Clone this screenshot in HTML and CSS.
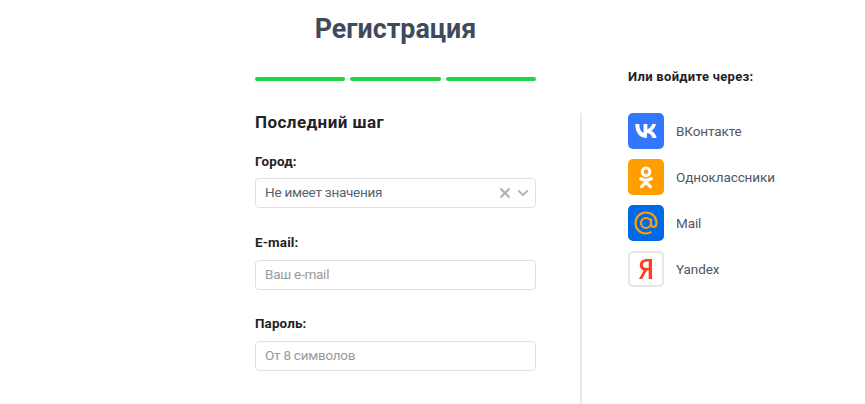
FILE: index.html
```html
<!DOCTYPE html>
<html lang="ru">

<head>
    <meta charset="UTF-8">
    <meta name="viewport" content="width=device-width, initial-scale=1.0">
    <title>Регистрация</title>
    <link rel="stylesheet" href="styles.css">
</head>

<body>
    <div class="page">
        <div class="head">
            <h1>Регистрация</h1>
            <div class="steps">
                <span class="step"></span>
                <span class="step"></span>
                <span class="step"></span>
            </div>
        </div>
        <div class="alt-title">Или войдите через:</div>

        <form class="form">
            <h2>Последний шаг</h2>

            <label class="field-label">Город:</label>
            <div class="select">
                <span class="select-value">Не имеет значения</span>
                <svg class="select-clear" width="12" height="12" viewBox="0 0 12 12">
                    <path d="M1.500 1.500l9 9M10.500 1.500l-9 9" fill="none" stroke="#b4b4b4" stroke-width="2.200" />
                </svg>
                <svg class="select-arrow" width="12" height="8" viewBox="0 0 12 8">
                    <path d="M1.200 1.500L6 6l4.800-4.500" fill="none" stroke="#b4b4b4" stroke-width="2" />
                </svg>
            </div>

            <label class="field-label field-label-email">E-mail:</label>
            <input class="input" type="text" placeholder="Ваш e-mail">

            <label class="field-label field-label-pass">Пароль:</label>
            <input class="input" type="password" placeholder="От 8 символов">
        </form>

        <ul class="socials">
            <li class="social">
                <span class="social-icon vk">
                    <svg width="22" height="14" viewBox="0 0 26 16" preserveAspectRatio="none">
                        <path d="M14 16C5.400 16 .5 10 .3 0h4.800c.2 6.500 2.500 9.200 5 10V0h4.500v5.700c2.500-.3 4.800-2.800 5.700-5.700h4.500c-.7 3.800-3.400 6.600-5.400 7.800 2 1 5 3.400 6.300 8.200h-5c-1-3.100-3.300-5.400-6.600-5.700V16z" fill="#fff" />
                    </svg>
                </span>
                <span>ВКонтакте</span>
            </li>
            <li class="social">
                <span class="social-icon ok">
                    <svg width="14" height="23" viewBox="0 0 16 26">
                        <circle cx="8" cy="6.500" r="4.400" fill="none" stroke="#fff" stroke-width="3.400" />
                        <path d="M2 14.200c3.700 2.300 8.300 2.300 12 0M8 16v2.500M8 18.500l-5 5M8 18.500l5 5" fill="none" stroke="#fff" stroke-width="3.600" stroke-linecap="round" />
                    </svg>
                </span>
                <span>Одноклассники</span>
            </li>
            <li class="social">
                <span class="social-icon mail">
                    <svg width="24" height="24" viewBox="0 0 24 24">
                        <circle cx="12" cy="12" r="5" fill="none" stroke="#ff9e00" stroke-width="2.200" />
                        <path d="M17 7.500v6c0 3.500 5.500 3.500 5.500-1.500C22.500 6 18 1.500 12 1.500S1.500 6 1.500 12 6 22.500 12 22.500c2.200 0 4-.6 5.500-1.600" fill="none" stroke="#ff9e00" stroke-width="2.200" />
                    </svg>
                </span>
                <span>Mail</span>
            </li>
            <li class="social">
                <span class="social-icon yandex">
                    <svg width="14" height="20" viewBox="0 0 14 22" preserveAspectRatio="none">
                        <path d="M13 22V0H8.500C3.500 0 .8 2.500 .8 6.500c0 3 1.300 4.800 3.800 6.400L0 22h3.100l5-9.500h1.600V22zM9.700 9.800H8.400C5.600 9.800 3.800 8.800 3.800 6.300S5.600 2.700 8.400 2.700h1.300z" fill="#fc3f1d" fill-rule="evenodd" />
                    </svg>
                </span>
                <span>Yandex</span>
            </li>
        </ul>
    </div>
</body>

</html>
```

FILE: styles.css
```css
html,
body {
    margin: 0;
    height: 404px;
    overflow: hidden;
    background: #fff;
}

body {
    font-family: Roboto, sans-serif;
    color: #1f2226;
}

.page {
    display: grid;
    grid-template-columns: 327px 1fr;
    grid-template-rows: 113px 291px;
    padding-left: 255px;
}

.head {
    width: 281px;
}

h1 {
    margin: 0;
    padding-top: 12px;
    font-size: 26.800px;
    line-height: 34px;
    font-weight: 700;
    text-align: center;
    color: #3f4a5a;
}

.steps {
    display: flex;
    gap: 5px;
    margin-top: 31px;
}

.step {
    flex: 1;
    height: 4px;
    border-radius: 2px;
    background: #1fd544;
}

.alt-title {
    margin-left: 46px;
    padding-top: 68px;
    font-size: 13px;
    line-height: 17px;
    font-weight: 700;
    letter-spacing: 0.3px;
}

.form {
    border-right: 2px solid #eaeaea;
    box-sizing: border-box;
    padding-right: 44px;
}

h2 {
    margin: 0;
    font-size: 17px;
    line-height: 18px;
    font-weight: 700;
    letter-spacing: 0.45px;
}

.field-label {
    display: block;
    margin-top: 22px;
    font-size: 13.400px;
    line-height: 17px;
    font-weight: 700;
    letter-spacing: 0.15px;
}

.field-label-email {
    margin-top: 26px;
}

.field-label-pass {
    margin-top: 26px;
    line-height: 16px;
}

.select,
.input {
    display: flex;
    align-items: center;
    box-sizing: border-box;
    width: 281px;
    height: 30px;
    margin-top: 8px;
    padding: 0 9px 2px;
    border: 1px solid #e0e0e0;
    border-radius: 4px;
    background: #fff;
    font-family: inherit;
    font-size: 13.500px;
    letter-spacing: -0.25px;
    color: #5a626e;
    outline: none;
}

.input {
    margin-top: 9px;
}

.input::placeholder {
    color: #9a9a9a;
    opacity: 1;
}

.select-value {
    flex: 1;
}

.select-clear {
    margin: 2px 6px 0 0;
}

.select-arrow {
    margin: 2px -3px 0 0;
}

.socials {
    display: flex;
    flex-direction: column;
    gap: 10px;
    margin: 0 0 0 46px;
    padding: 0;
    list-style: none;
}

.social {
    display: flex;
    align-items: center;
    gap: 12px;
    font-size: 13.500px;
    letter-spacing: -0.1px;
    color: #4f5864;
}

.social-icon {
    display: flex;
    align-items: center;
    justify-content: center;
    box-sizing: border-box;
    width: 36px;
    height: 36px;
    border-radius: 5px;
}

.vk {
    background: #3377ff;
}

.ok {
    background: #ff9e00;
}

.mail {
    background: #0069e6;
}

.yandex {
    background: #fff;
    border: 2px solid #e6e6e6;
}
```
